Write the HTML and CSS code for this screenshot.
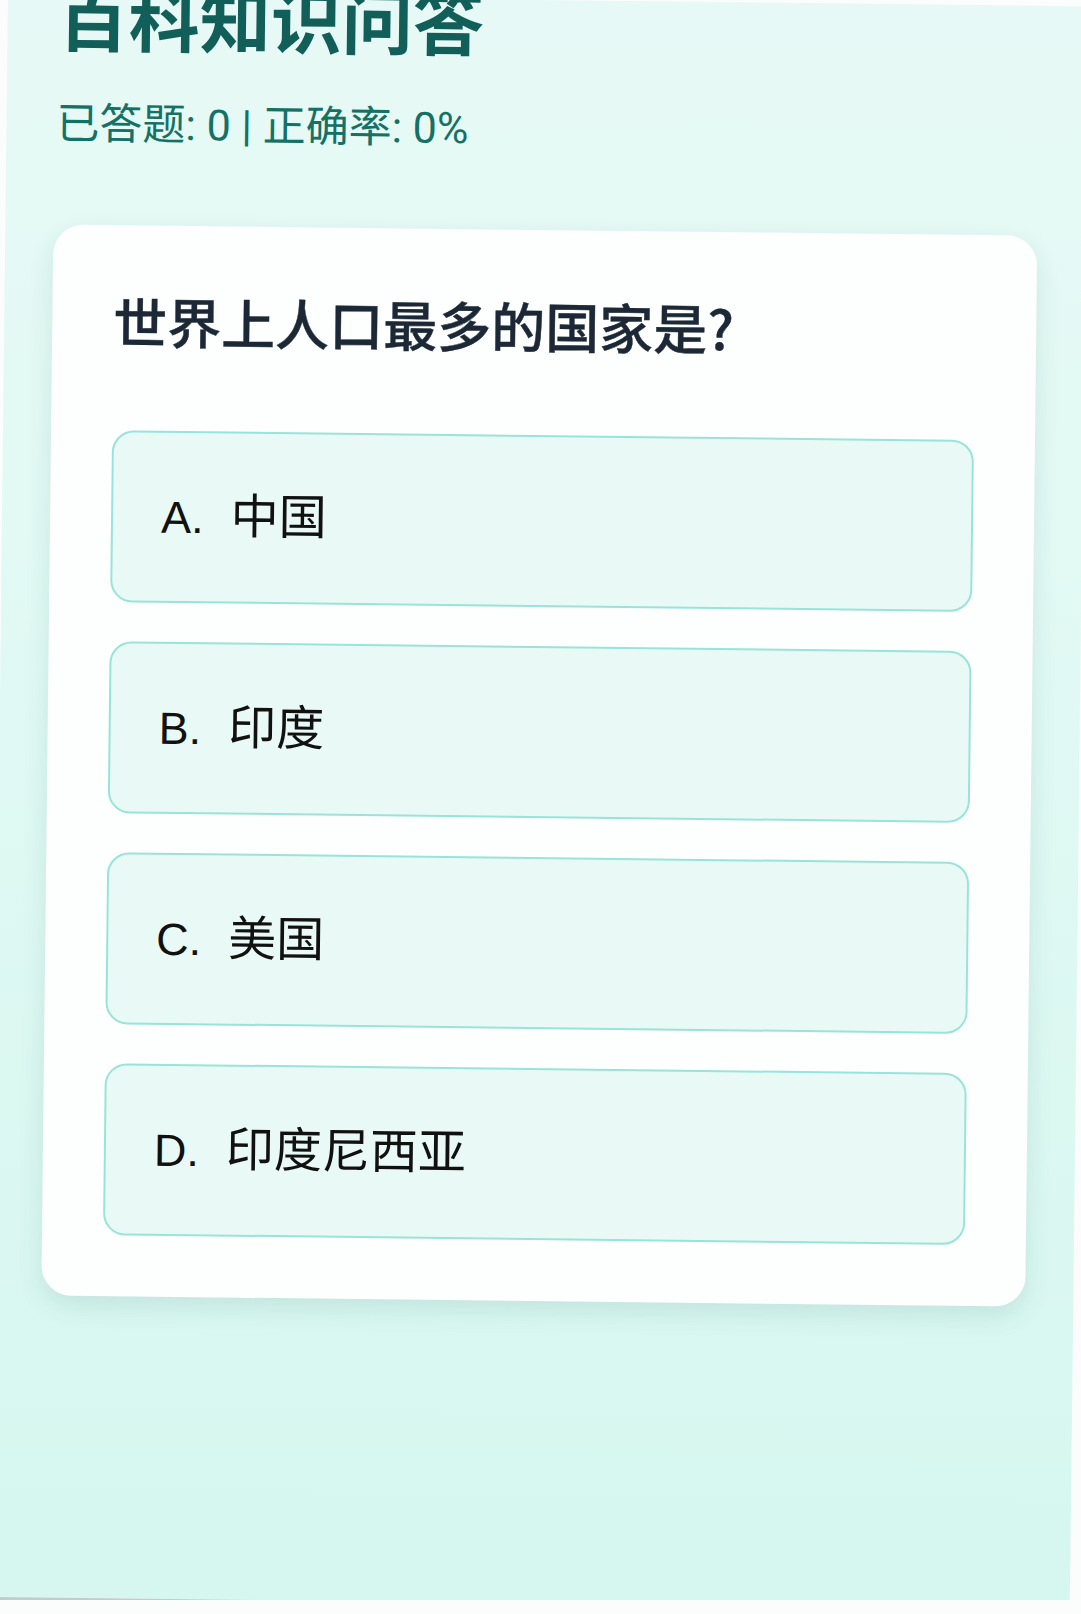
FILE: index.html
```html
<!DOCTYPE html>
<html lang="zh-CN">
<head>
<meta charset="utf-8">
<title>百科知识问答</title>
<link rel="stylesheet" href="styles.css">
</head>
<body>
<div class="sheet">
  <header class="header">
    <h1 class="title">百科知识问答</h1>
    <p class="stats">已答题: 0 | 正确率: 0%</p>
  </header>
  <main class="card">
    <h2 class="question">世界上人口最多的国家是?</h2>
    <div class="options">
      <button class="option"><span class="label">A.</span>中国</button>
      <button class="option"><span class="label">B.</span>印度</button>
      <button class="option"><span class="label">C.</span>美国</button>
      <button class="option"><span class="label">D.</span>印度尼西亚</button>
    </div>
  </main>
</div>
</body>
</html>
```
FILE: styles.css
```css
html {
  overflow: hidden;
  background: #fbfcfc;
}

body {
  margin: 0;
  padding: 0;
  background: #fbfcfc;
}

.sheet {
  box-sizing: border-box;
  width: 1080px;
  height: 1606px;
  margin-left: 8px;
  margin-top: -6px;
  padding: 0 48px;
  transform-origin: 0 0;
  transform: rotate(0.65deg);
  background: linear-gradient(180deg, #e7f9f6 0%, #e2f9f4 35%, #d5f7ef 100%);
  border-bottom: 3px solid #c5caca;
  font-family: "Noto Sans CJK SC", "Noto Sans", sans-serif;
}

.header {
  padding-left: 2px;
  padding-top: 1px;
}

.title {
  margin: -22px 0 0 0;
  font-size: 71px;
  line-height: 82px;
  font-weight: 700;
  color: #125e58;
}

.stats {
  margin: 37px 0 0 0;
  font-family: Roboto, "Noto Sans CJK SC", sans-serif;
  font-size: 43px;
  line-height: 63px;
  font-weight: 400;
  color: #147166;
}

.card {
  margin-top: 69px;
  box-sizing: border-box;
  padding: 61px;
  background: #fdfefe;
  border-radius: 30px;
  box-shadow: 0 10px 26px rgba(20, 80, 70, 0.11);
}

.question {
  margin: 0 0 76px 0;
  font-size: 54px;
  line-height: 68px;
  font-weight: 500;
  -webkit-text-stroke: 0.4px #1d2836;
  color: #1d2836;
}

.options {
  display: flex;
  flex-direction: column;
  gap: 39px;
}

.option {
  display: block;
  width: 100%;
  box-sizing: border-box;
  margin: 0;
  padding: 49px 48px;
  text-align: left;
  background: #e9faf6;
  border: 2px solid #98e4d8;
  border-radius: 22px;
  font-family: "Liberation Sans", "Noto Sans CJK SC", sans-serif;
  font-size: 48px;
  line-height: 69px;
  color: #111;
}

.label {
  font-size: 45px;
  margin-right: 27px;
}
```
